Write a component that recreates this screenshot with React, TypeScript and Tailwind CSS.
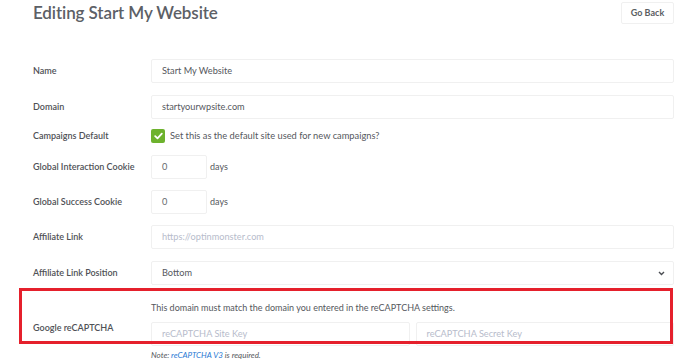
export default function App() {
  const font = { fontFamily: "Lato, 'Open Sans', sans-serif" };
  const label = "w-[118px] shrink-0 text-[9px] font-semibold text-[#4f5156]";
  const input =
    "h-[24px] border border-[#f0f0f0] rounded-[2px] bg-white flex items-center px-[10px] text-[9.2px]";

  return (
    <div className="w-[680px] h-[363px] bg-white overflow-hidden pl-[33px] pr-[6px]" style={font}>
      {/* Header */}
      <div className="flex items-center justify-between pt-[1px] h-[24px]">
        <h1 className="text-[17px] font-semibold text-[#5c6066] tracking-[-0.1px]">
          Editing Start My Website
        </h1>
        <button className="h-[22px] w-[53px] mt-[1px] border border-[#f0f0f0] rounded-[2px] text-[9px] font-bold text-[#5a5d62]">
          Go Back
        </button>
      </div>

      {/* Name */}
      <div className="flex items-center mt-[35px]">
        <div className={label}>Name</div>
        <div className={`${input} flex-1 text-[#55585d]`}>Start My Website</div>
      </div>

      {/* Domain */}
      <div className="flex items-center mt-[12px]">
        <div className={label}>Domain</div>
        <div className={`${input} flex-1 text-[#55585d]`}>startyourwpsite.com</div>
      </div>

      {/* Campaigns default */}
      <div className="flex items-center mt-[5px] h-[24px]">
        <div className={label}>Campaigns Default</div>
        <div className="w-[14px] h-[14px] rounded-[2px] bg-[#6db22d] flex items-center justify-center">
          <svg width="9" height="8" viewBox="0 0 9 8">
            <path d="M1.2 4.2 L3.5 6.3 L7.8 1.6" stroke="white" strokeWidth="1.8" fill="none" strokeLinecap="round" strokeLinejoin="round" />
          </svg>
        </div>
        <span className="ml-[5px] text-[9.3px] text-[#55585d]">
          Set this as the default site used for new campaigns?
        </span>
      </div>

      {/* Global interaction cookie */}
      <div className="flex items-center mt-[7px]">
        <div className={label}>Global Interaction Cookie</div>
        <div className={`${input} w-[56px] h-[23px] text-[#66696e]`}>0</div>
        <span className="ml-[3px] text-[9px] text-[#55585d]">days</span>
      </div>

      {/* Global success cookie */}
      <div className="flex items-center mt-[11px]">
        <div className={label}>Global Success Cookie</div>
        <div className={`${input} w-[56px] h-[23px] text-[#66696e]`}>0</div>
        <span className="ml-[3px] text-[9px] text-[#55585d]">days</span>
      </div>

      {/* Affiliate link */}
      <div className="flex items-center mt-[11px]">
        <div className={label}>Affiliate Link</div>
        <div className={`${input} flex-1 h-[23px] text-[#b7bccb]`}>https://optinmonster.com</div>
      </div>

      {/* Affiliate link position */}
      <div className="flex items-center mt-[12px]">
        <div className={label}>Affiliate Link Position</div>
        <div className={`${input} flex-1 justify-between text-[#55585d] pr-[8px]`}>
          <span>Bottom</span>
          <svg width="7" height="5" viewBox="0 0 7 5">
            <path d="M1 1 L3.5 3.5 L6 1" stroke="#4a4d52" strokeWidth="1.4" fill="none" />
          </svg>
        </div>
      </div>

      {/* reCAPTCHA */}
      <div className="relative flex items-start mt-[16px]">
        <div className={`${label} mt-[20px]`}>Google reCAPTCHA</div>
        <div className="flex-1 flex flex-col">
          <div className="h-[14px] flex items-center text-[9px] text-[#55585d]">
            This domain must match the domain you entered in the reCAPTCHA settings.
          </div>
          <div className="flex gap-[6px] mt-[7px]">
            <div className={`${input} flex-1 h-[23px] text-[#b7bccb]`}>reCAPTCHA Site Key</div>
            <div className={`${input} flex-1 h-[23px] text-[#b7bccb]`}>reCAPTCHA Secret Key</div>
          </div>
          <div className="mt-[3px] h-[12px] flex items-center text-[8px] italic text-[#55585d]">
            Note:&nbsp;<span className="text-[#2a7ad4]">reCAPTCHA V3</span>&nbsp;is required.
          </div>
        </div>
        {/* annotation box */}
        <div className="absolute left-[-14px] top-[-13px] w-[654px] h-[56px] border-[3px] border-[#e5202c] pointer-events-none" />
      </div>
    </div>
  );
}
